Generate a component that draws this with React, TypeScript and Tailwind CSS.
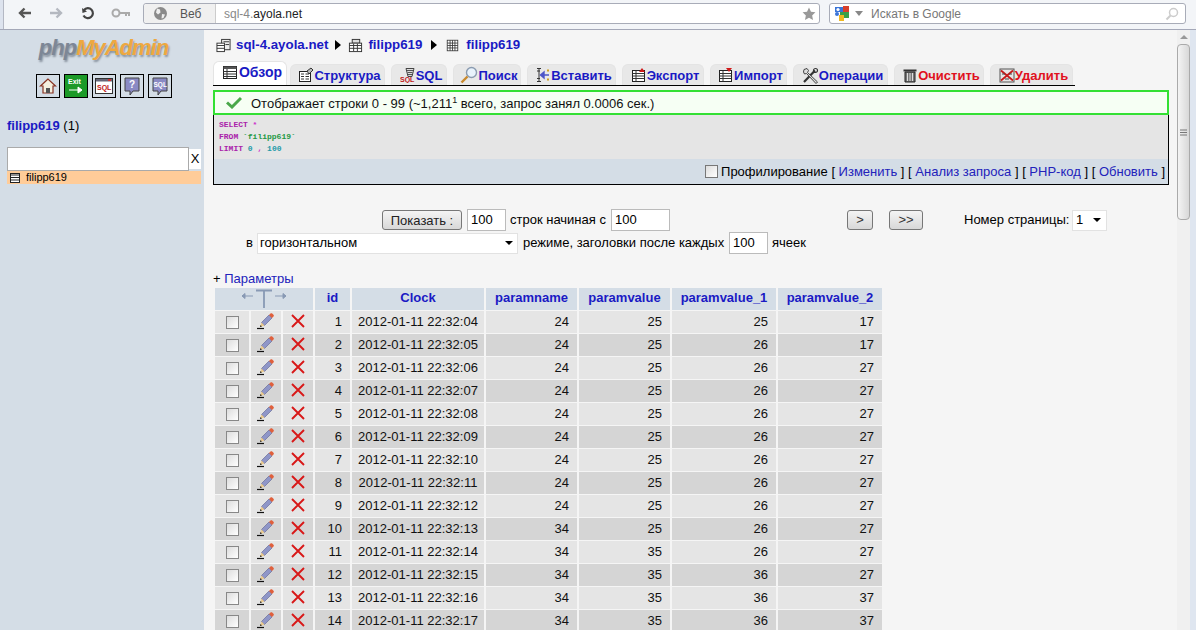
import type { ReactNode } from "react";

const rows = [
  [1, "04", 24, 25, 25, 17],
  [2, "05", 24, 25, 26, 17],
  [3, "06", 24, 25, 26, 27],
  [4, "07", 24, 25, 26, 27],
  [5, "08", 24, 25, 26, 27],
  [6, "09", 24, 25, 26, 27],
  [7, "10", 24, 25, 26, 27],
  [8, "11", 24, 25, 26, 27],
  [9, "12", 24, 25, 26, 27],
  [10, "13", 34, 25, 26, 27],
  [11, "14", 34, 35, 26, 27],
  [12, "15", 34, 35, 36, 27],
  [13, "16", 34, 35, 36, 37],
  [14, "17", 34, 35, 36, 37],
];

function Svg({ size = 16, children }: { size?: number; children: ReactNode }) {
  return (
    <svg width={size} height={size} viewBox="0 0 16 16" className="shrink-0">
      {children}
    </svg>
  );
}

function TableIcon() {
  return (
    <Svg>
      <rect x="1.5" y="2.5" width="13" height="12" fill="#fff" stroke="#222" />
      <rect x="1.5" y="2.5" width="13" height="2.5" fill="#555" />
      <path d="M1.5 7.5h13M1.5 10h13M1.5 12.5h13M5 5v9" stroke="#333" />
    </Svg>
  );
}

function StructIcon() {
  return (
    <Svg>
      <rect x="1.5" y="4.5" width="11" height="10" fill="#fff" stroke="#222" />
      <path d="M3 7h3M3 9.5h3M3 12h3M7.5 7h3.5M7.5 9.5h3.5M7.5 12h3.5" stroke="#333" />
      <path d="M9 4l4-3 2 2-4 4z" fill="#bbb" stroke="#333" />
    </Svg>
  );
}

function SqlTabIcon() {
  return (
    <Svg>
      <path d="M6 1.5h8l-2 8H8z" fill="#ddd" stroke="#444" />
      <path d="M7 3.5h6M7.5 5.5h5M8 7.5h4" stroke="#555" />
      <text x="0" y="15" fontSize="7" fontWeight="700" fill="#c01818" fontFamily="Liberation Sans, sans-serif">
        SQL
      </text>
    </Svg>
  );
}

function SearchIcon() {
  return (
    <svg width="18" height="18" viewBox="0 0 18 18" className="shrink-0">
      <circle cx="11.5" cy="6.5" r="5" fill="#e8f2fb" stroke="#8a9bb0" strokeWidth="1.4" />
      <path d="M7.5 10.5L1.5 16.5" stroke="#c98a2c" strokeWidth="2.4" />
    </svg>
  );
}

function InsertIcon() {
  return (
    <Svg>
      <path d="M2 1.5h4M4 1.5v13M2 14.5h4M2 4h3M2 11.5h3" stroke="#333" />
      <path d="M14 8H9M9 5L5.5 8 9 11z" fill="#4c55c8" stroke="#4c55c8" strokeWidth="1.4" />
      <rect x="12" y="2.5" width="2" height="2" fill="#d0a020" />
      <rect x="12" y="11.5" width="2" height="2" fill="#d0a020" />
    </Svg>
  );
}

function ExportIcon({ down = false }: { down?: boolean }) {
  return (
    <Svg>
      <rect x="1.5" y="3.5" width="12" height="11" fill="#fff" stroke="#222" />
      <path d="M1.5 6.5h12M1.5 9h12M1.5 11.5h12M5 3.5v11" stroke="#333" />
      {down ? <path d="M8 1h6l-3 4z" fill="#d01818" /> : <path d="M8 5l3-4 3 4z" fill="#d01818" />}
    </Svg>
  );
}

function OpsIcon() {
  return (
    <svg width="17" height="17" viewBox="0 0 17 17" className="shrink-0">
      <path d="M2 15L13 3.5" stroke="#333" strokeWidth="2.2" />
      <path d="M2 2.5l3-1 1.5 2-1 2 10 9.5-1.5 1.5-9.5-10-2 .5-1-2z" fill="#ddd" stroke="#333" strokeWidth=".9" />
      <circle cx="13.5" cy="3.5" r="2" fill="none" stroke="#333" strokeWidth="1.2" />
    </svg>
  );
}

function TrashIcon() {
  return (
    <Svg>
      <rect x="1.5" y="2.5" width="13" height="2" fill="#333" />
      <path d="M3 5h10v10H3z" fill="#777" stroke="#222" />
      <path d="M5.5 6v8M8 6v8M10.5 6v8" stroke="#ddd" />
    </Svg>
  );
}

function DropIcon() {
  return (
    <Svg>
      <rect x="1" y="2" width="14" height="13" fill="#e6e6e6" stroke="#555" />
      <path d="M2 3.5l12 10M14 3.5l-12 10" stroke="#c81a1a" strokeWidth="1.8" />
      <path d="M3 7h3M10 7h3M6 12h4" stroke="#444" />
    </Svg>
  );
}

function PencilIcon() {
  return (
    <svg width="18" height="18" viewBox="0 0 18 18">
      <path d="M4.5 10.5L12 3l3 3-7.500 7.500z" fill="#8f96c8" stroke="#5c6190" strokeWidth=".6" />
      <path d="M12 3l1.500-1.500c.5-.5 1.200-.5 1.700 0l1.300 1.300c.5.5.5 1.200 0 1.700L15 6z" fill="#e0603c" />
      <path d="M4.500 10.500L3 15l4.500-1.500z" fill="#eccb8e" />
      <path d="M3 15l.6-1.900 1.300 1.300z" fill="#111" />
      <path d="M0 16.500h7" stroke="#111" strokeWidth="1.200" />
    </svg>
  );
}

function CrossIcon() {
  return (
    <svg width="14" height="14" viewBox="0 0 14 14">
      <path d="M1 1l12 12M13 1L1 13" stroke="#d81818" strokeWidth="1.9" />
    </svg>
  );
}

function Sep({ children }: { children: ReactNode }) {
  return (
    <>
      [ <a className="text-[#2222bb]">{children}</a> ]
    </>
  );
}

function Tab({
  w,
  icon,
  label,
  active,
  red,
}: {
  w: string;
  icon: ReactNode;
  label: string;
  active?: boolean;
  red?: boolean;
}) {
  return (
    <div
      className={`flex items-center justify-center rounded-t-md border border-b-0 border-[#e4e4e4] pl-[4px] ${w} ${
        active ? "h-[24px] bg-white pb-1" : "h-[21px] bg-[#e8e8e8]"
      }`}
    >
      {icon}
      <span
        className={`font-bold leading-none ${active ? "ml-px text-[14px]" : "text-[13px]"} ${
          red ? "text-[#e01020]" : "text-[#1a1ac4]"
        }`}
      >
        {label}
      </span>
    </div>
  );
}

function SideButton({ children, bg = "bg-[#d4dde6]" }: { children: ReactNode; bg?: string }) {
  return (
    <div className={`flex h-[24px] w-[24px] items-center justify-center border border-black ${bg}`}>{children}</div>
  );
}

function PageButton({ w, children }: { w: string; children: ReactNode }) {
  return (
    <button
      className={`flex h-[20px] items-center justify-center rounded-[3px] border border-[#777] bg-gradient-to-b from-[#f4f4f4] to-[#d8d8d8] text-[13px] text-[#333] ${w}`}
    >
      {children}
    </button>
  );
}

function FakeInput({ w, value, h = "h-[22px]" }: { w: string; value: string; h?: string }) {
  return (
    <div className={`flex items-center border border-[#bbb] bg-white pl-[3px] text-[13px] ${w} ${h}`}>{value}</div>
  );
}

const thClass = "h-[22px] bg-[#d4dde6] pb-[2px] text-center align-middle text-[13px] font-bold text-[#1a1ac4]";
const tdClass = "h-[22px] p-0 pr-[8px] text-right align-middle text-[13px] text-[#111]";

export default function App() {
  return (
    <div className="flex h-[630px] w-[1196px] flex-col overflow-hidden bg-[#f5f5f5] font-['Liberation_Sans',Arial,sans-serif] text-[13px] text-black">
      <header className="flex h-[30px] shrink-0 items-start border-b border-[#a4a8b8] bg-[#f3f5f8] pt-[3px]">
        <div className="-mt-[3px] h-[29px] w-[4px] shrink-0 border-r border-[#b4b8c4] bg-[#dde3ee]" />
        <div className="ml-[14px] flex h-[20px] w-[125px] items-center">
          <svg width="14" height="14" viewBox="0 0 14 14">
            <path d="M13 7H2M6.5 2.5L2 7l4.5 4.5" fill="none" stroke="#555" strokeWidth="2.4" />
          </svg>
          <svg width="14" height="14" viewBox="0 0 14 14" className="ml-[17px]">
            <path d="M1 7h11M7.5 2.5L12 7l-4.5 4.5" fill="none" stroke="#b4b8c0" strokeWidth="2.4" />
          </svg>
          <svg width="14" height="14" viewBox="0 0 14 14" className="ml-[18px]">
            <path d="M3 4a5 5 0 1 1-.5 5.5" fill="none" stroke="#444" strokeWidth="2.2" />
            <path d="M1 2l.5 5 4.5-1.5z" fill="#444" />
          </svg>
          <svg width="20" height="10" viewBox="0 0 20 10" className="ml-[16px]">
            <circle cx="5" cy="5" r="3.5" fill="none" stroke="#aaa" strokeWidth="2" />
            <path d="M8 5h11M15 5v3M18 5v3" stroke="#aaa" strokeWidth="2" />
          </svg>
        </div>
        <div className="flex h-[21px] w-[677px] items-center rounded-[3px] border border-[#a8acb8] bg-white text-[12px]">
          <div className="flex h-full w-[72px] items-center rounded-l-[3px] border-r border-[#ccc] bg-[#f0f0f0] pl-[9px]">
            <svg width="15" height="15" viewBox="0 0 15 15">
              <circle cx="7.5" cy="7.5" r="6.5" fill="#8a8a8a" />
              <path d="M4 2.5l3 1 .5 3-2.5 2-2-2zM9 8l3 .5-1.5 3.5-2 .5z" fill="#eee" />
            </svg>
            <span className="ml-[12px] text-[#555]">Веб</span>
          </div>
          <div className="ml-[8px] flex-1 text-[12px] text-[#222]">
            <span className="text-[#888]">sql-4.</span>ayola.net
          </div>
          <svg width="14" height="14" viewBox="0 0 24 24" className="mr-[3px]">
            <path d="M12 1l3.4 7.3 7.6.9-5.600 5.300 1.500 7.900L12 18.500 5.100 22.400l1.500-7.900L1 9.200l7.600-.9z" fill="#999" />
          </svg>
        </div>
        <div className="ml-[9px] flex h-[21px] w-[357px] items-center rounded-[3px] border border-[#a8acb8] bg-white text-[12px]">
          <svg width="16" height="16" viewBox="0 0 16 16" className="ml-[4px]">
            <path d="M1 1h8v5H1z" fill="#3a74d8" />
            <path d="M9 0h6v6H9z" fill="#d8402c" />
            <path d="M6 6h9v6H6z" fill="#3aa048" />
            <path d="M5 9h5v6H5z" fill="#f0b820" />
            <circle cx="4" cy="3.500" r="1.600" fill="#fff" />
            <circle cx="3" cy="8" r="2" fill="#3a74d8" />
          </svg>
          <span className="ml-[5px] h-0 w-0 border-x-[4px] border-t-[5px] border-x-transparent border-t-[#888]" />
          <span className="ml-[8px] flex-1 text-[#777]">Искать в Google</span>
          <svg width="14" height="14" viewBox="0 0 14 14" className="mr-[6px]">
            <circle cx="8.500" cy="5.500" r="4" fill="none" stroke="#ccc" strokeWidth="1.500" />
            <path d="M5.500 8.500L1.500 12.500" stroke="#ccc" strokeWidth="2" />
          </svg>
        </div>
      </header>

      <div className="flex min-h-0 flex-1">
        <aside className="w-[204px] shrink-0 bg-[#d4dde6]">
          <div className="mt-[5px] pl-[3px] text-center text-[22px] font-bold italic leading-[26px] tracking-[-1px] [text-shadow:1px_2px_2px_#8a94a0]">
            <span className="text-[#7d8796]">php</span>
            <span className="text-[#eea840]">MyAdmin</span>
          </div>
          <div className="mt-[13px] flex justify-center gap-[4px] pl-[4px]">
            <SideButton>
              <svg width="18" height="18" viewBox="0 0 18 18">
                <path d="M9 2L1.500 9h2.500v7h10V9h2.500z" fill="#f4f0e0" stroke="#883322" strokeWidth="1.200" />
                <rect x="7" y="11" width="4" height="5" fill="#555" />
              </svg>
            </SideButton>
            <SideButton bg="bg-[#1c9a28]">
              <svg width="20" height="20" viewBox="0 0 20 20">
                <text x="2" y="8" fontSize="7" fontWeight="700" fill="#fff" fontFamily="Liberation Sans, sans-serif">
                  Exit
                </text>
                <path d="M3 14h12M12 11l4 3-4 3z" stroke="#fff" fill="#fff" />
              </svg>
            </SideButton>
            <SideButton>
              <svg width="20" height="20" viewBox="0 0 20 20">
                <rect x="1.500" y="2.500" width="17" height="15" fill="#fff" stroke="#333" />
                <rect x="2" y="3" width="16" height="2.500" fill="#667" />
                <rect x="14" y="3" width="3" height="2" fill="#d03030" />
                <text x="3" y="14" fontSize="7" fontWeight="700" fill="#c01818" fontFamily="Liberation Sans, sans-serif">
                  SQL
                </text>
              </svg>
            </SideButton>
            <SideButton>
              <svg width="20" height="20" viewBox="0 0 20 20">
                <path d="M3 2h14v13h-6l-3 4v-4H3z" fill="#8a8ac4" stroke="#444" />
                <text x="7" y="12" fontSize="10" fontWeight="700" fill="#fff" fontFamily="Liberation Sans, sans-serif">
                  ?
                </text>
              </svg>
            </SideButton>
            <SideButton>
              <svg width="20" height="20" viewBox="0 0 20 20">
                <path d="M3 2h14v13h-6l-3 4v-4H3z" fill="#8a8ac4" stroke="#444" />
                <text x="3.500" y="11" fontSize="6.500" fontWeight="700" fill="#fff" fontFamily="Liberation Sans, sans-serif">
                  SQL
                </text>
              </svg>
            </SideButton>
          </div>
          <div className="ml-[7px] mt-[19px] text-[13px] leading-[18px]">
            <span className="font-bold text-[#1a1ac4]">filipp619</span> (1)
          </div>
          <div className="ml-[7px] mt-[12px] flex w-[194px] items-center">
            <div className="h-[24px] w-[182px] border border-[#aaa] bg-white" />
            <div className="flex h-[20px] flex-1 items-center justify-center bg-white text-[13px]">X</div>
          </div>
          <div className="ml-[7px] flex h-[13px] w-[194px] items-center bg-[#ffcc99] pl-[3px] text-[11px]">
            <svg width="10" height="10" viewBox="0 0 10 10">
              <rect x=".5" y=".5" width="9" height="9" fill="#fff" stroke="#222" />
              <path d="M.5 2h9M1 4.500h8M1 7h8" stroke="#222" />
            </svg>
            <span className="ml-[6px]">filipp619</span>
          </div>
        </aside>

        <main className="min-w-0 flex-1 pl-[9px] pt-[5px]">
          <div className="flex h-[20px] items-center text-[13.3px] font-bold text-[#1a1ac4]">
            <div className="mr-[5px] ml-[3px]">
              <Svg size={15}>
                <rect x="6" y="1.500" width="9" height="11" fill="#eee" stroke="#333" />
                <rect x="1" y="5.500" width="8" height="9" fill="#fff" stroke="#333" />
                <path d="M1 8h8M1 11h8M8 4h6M10 7h4" stroke="#333" />
              </Svg>
            </div>
            sql-4.ayola.net
            <span className="mx-[7px] h-0 w-0 border-y-[5px] border-l-[6px] border-y-transparent border-l-black" />
            <div className="mr-[5px]">
              <Svg size={15}>
                <rect x="4.500" y="1.500" width="8" height="4" fill="#ddd" stroke="#333" />
                <rect x="1.500" y="5.500" width="13" height="9" fill="#fff" stroke="#333" />
                <path d="M1.500 8h13M1.500 11h13M6 6v8M10 6v8" stroke="#333" />
              </Svg>
            </div>
            filipp619
            <span className="mx-[9px] h-0 w-0 border-y-[5px] border-l-[6px] border-y-transparent border-l-black" />
            <div className="mr-[7px]">
              <Svg size={13}>
                <rect x="1.500" y="1.500" width="13" height="13" fill="#fff" stroke="#333" />
                <path d="M1.500 5h13M1.500 8h13M1.500 11h13M5 1.500v13M8 1.500v13M11 1.500v13" stroke="#333" />
              </Svg>
            </div>
            filipp619
          </div>

          <div className="mt-[5px] flex h-[26px] w-[862px] items-end gap-[6px] border-b border-black">
            <Tab w="-mr-[3px] w-[74px]" active icon={<TableIcon />} label="Обзор" />
            <Tab w="w-[95px]" icon={<StructIcon />} label="Структура" />
            <Tab w="w-[56px]" icon={<SqlTabIcon />} label="SQL" />
            <Tab w="w-[68px]" icon={<SearchIcon />} label="Поиск" />
            <Tab w="w-[89px]" icon={<InsertIcon />} label="Вставить" />
            <Tab w="w-[82px]" icon={<ExportIcon />} label="Экспорт" />
            <Tab w="w-[77px]" icon={<ExportIcon down />} label="Импорт" />
            <Tab w="w-[95px]" icon={<OpsIcon />} label="Операции" />
            <Tab w="w-[90px]" red icon={<TrashIcon />} label="Очистить" />
            <Tab w="w-[83px]" red icon={<DropIcon />} label="Удалить" />
          </div>

          <div className="mt-[4px] flex h-[25px] w-[956px] items-center border-2 border-[#33e033] bg-[#f6fff4] pl-[11px]">
            <svg width="16" height="13" viewBox="0 0 16 13">
              <path d="M1 6.500l5 4.500 9-9" fill="none" stroke="#4aa84a" strokeWidth="3" />
            </svg>
            <span className="ml-[9px] pt-[2px] text-[13px] leading-[16px] text-[#111]">
              Отображает строки 0 - 99 (~1,211<sup className="text-[9px]">1</sup> всего, запрос занял 0.0006 сек.)
            </span>
          </div>

          <div className="w-[956px] border-x border-b border-black">
            <div className="h-[44px] bg-[#e5e5e5] pl-[5px] pt-[4px] font-['Liberation_Mono',monospace] text-[8px] font-bold leading-[12px]">
              <div className="text-[#aa22aa]">
                SELECT <span className="text-[#cc33cc]">*</span>
              </div>
              <div>
                <span className="text-[#aa22aa]">FROM</span> <span className="text-[#229944]">`filipp619`</span>
              </div>
              <div>
                <span className="text-[#aa22aa]">LIMIT</span> <span className="text-[#1f9aa8]">0</span>{" "}
                <span className="text-[#cc33cc]">,</span> <span className="text-[#1f9aa8]">100</span>
              </div>
            </div>
            <div className="flex h-[25px] items-center justify-end whitespace-pre bg-[#d4dde6] pr-[3px] text-[13px]">
              <span className="mr-[3px] h-[13px] w-[13px] border border-[#777] bg-gradient-to-br from-[#ddd] to-white" />
              Профилирование <Sep>Изменить</Sep> <Sep>Анализ запроса</Sep> <Sep>PHP-код</Sep> <Sep>Обновить</Sep>
            </div>
          </div>

          <div className="mt-[24px] flex h-[22px] items-center">
            <button className="ml-[169px] h-[20px] w-[80px] rounded-[3px] border border-[#777] bg-gradient-to-b from-[#f4f4f4] to-[#d8d8d8] text-[13px] text-[#222]">
              Показать :
            </button>
            <FakeInput w="ml-[5px] w-[39px]" value="100" />
            <span className="ml-[4px] w-[101px]">строк начиная с</span>
            <FakeInput w="w-[59px]" value="100" />
            <PageButton w="ml-[177px] w-[26px]">&gt;</PageButton>
            <PageButton w="ml-[16px] w-[34px]">&gt;&gt;</PageButton>
            <span className="ml-[41px] w-[103px] whitespace-nowrap">Номер страницы:</span>
            <div className="ml-[5px] flex h-[21px] w-[35px] items-center justify-between border border-[#e2e2e2] bg-white pl-[3px] pr-[5px]">
              1<span className="h-0 w-0 border-x-[4px] border-t-[4px] border-x-transparent border-t-black" />
            </div>
          </div>
          <div className="mt-px flex h-[22px] items-center">
            <span className="ml-[33px] w-[7px]">в</span>
            <div className="ml-[4px] flex h-[21px] w-[261px] items-center justify-between border border-[#e2e2e2] bg-white pl-[2px] pr-[4px]">
              горизонтальном
              <span className="h-0 w-0 border-x-[4px] border-t-[4px] border-x-transparent border-t-black" />
            </div>
            <span className="ml-[5px] w-[206px] whitespace-nowrap">режиме, заголовки после каждых</span>
            <FakeInput w="w-[39px]" value="100" />
            <span className="ml-[4px]">ячеек</span>
          </div>

          <div className="mt-[17px] h-[16px] leading-[16px]">
            + <a className="text-[#2222bb]">Параметры</a>
          </div>

          <table className="table-fixed border-separate border-spacing-x-[2px] border-spacing-y-px">
            <colgroup>
              <col className="w-[34px]" />
              <col className="w-[30px]" />
              <col className="w-[30px]" />
              <col className="w-[35px]" />
              <col className="w-[132px]" />
              <col className="w-[91px]" />
              <col className="w-[91px]" />
              <col className="w-[104px]" />
              <col className="w-[104px]" />
            </colgroup>
            <thead>
              <tr>
                <th colSpan={3} className={`${thClass} !pb-0`}>
                  <svg width="46" height="20" viewBox="0 0 46 20" className="mx-auto">
                    <path d="M1 7h11M1 7l3-2.500v5zM45 7H34M45 7l-3-2.500v5z" fill="#8899b4" stroke="#8899b4" />
                    <path d="M15 1.500h16M23 1.500V19" stroke="#8899b4" strokeWidth="1.800" fill="none" />
                  </svg>
                </th>
                <th className={thClass}>id</th>
                <th className={thClass}>Clock</th>
                <th className={thClass}>paramname</th>
                <th className={thClass}>paramvalue</th>
                <th className={thClass}>paramvalue_1</th>
                <th className={thClass}>paramvalue_2</th>
              </tr>
            </thead>
            <tbody>
              {rows.map((r, i) => {
                const bg = i % 2 === 0 ? "bg-[#e5e5e5]" : "bg-[#d5d5d5]";
                return (
                  <tr key={r[0]}>
                    <td className={`h-[22px] p-0 ${bg}`}>
                      <span className="mx-auto block h-[13px] w-[13px] border border-[#888] bg-gradient-to-br from-[#ddd] to-white" />
                    </td>
                    <td className={`h-[22px] p-0 ${bg}`}>
                      <div className="flex justify-center pb-[2px]">
                        <PencilIcon />
                      </div>
                    </td>
                    <td className={`h-[22px] p-0 ${bg}`}>
                      <div className="flex justify-center pb-[2px]">
                        <CrossIcon />
                      </div>
                    </td>
                    <td className={`${tdClass} ${bg}`}>{r[0]}</td>
                    <td className={`${tdClass} ${bg} !pr-0 !text-center`}>2012-01-11 22:32:{r[1]}</td>
                    <td className={`${tdClass} ${bg}`}>{r[2]}</td>
                    <td className={`${tdClass} ${bg}`}>{r[3]}</td>
                    <td className={`${tdClass} ${bg}`}>{r[4]}</td>
                    <td className={`${tdClass} ${bg}`}>{r[5]}</td>
                  </tr>
                );
              })}
            </tbody>
          </table>
        </main>

        <div className="flex w-[19px] shrink-0">
          <div className="flex w-[13px] flex-col items-center bg-[#f0f0f0]">
            <span className="mt-[5px] h-0 w-0 border-x-[4px] border-b-[4px] border-x-transparent border-b-[#999]" />
            <div className="mt-[5px] flex h-[176px] w-[13px] items-center justify-center rounded-sm border border-[#aaa] bg-gradient-to-r from-[#f4f4f4] to-[#d8d8d8]">
              <svg width="7" height="7" viewBox="0 0 7 7">
                <path d="M0 1h7M0 3.500h7M0 6h7" stroke="#777" />
              </svg>
            </div>
          </div>
          <div className="flex-1 bg-[#dfe6f0]" />
        </div>
      </div>
    </div>
  );
}
